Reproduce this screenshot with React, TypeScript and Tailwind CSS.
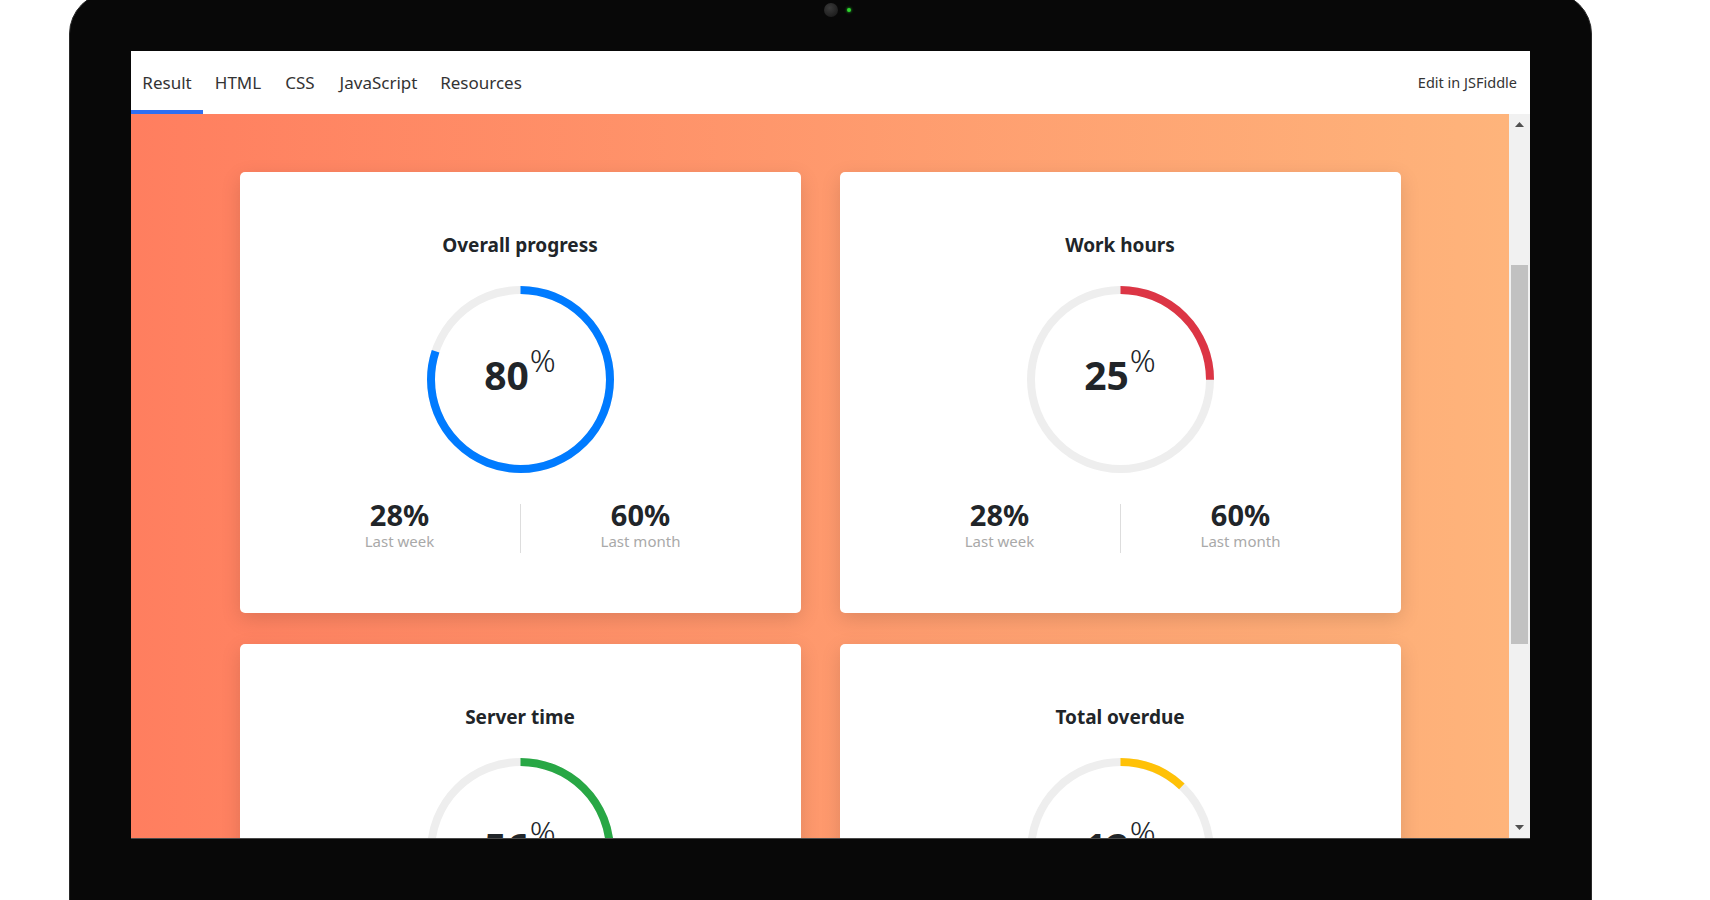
const font = { fontFamily: '"Noto Sans", "Open Sans", sans-serif' };

type Gauge = { title: string; value: number; color: string };

const gauges: Gauge[] = [
  { title: "Overall progress", value: 80, color: "#007bff" },
  { title: "Work hours", value: 25, color: "#dc3545" },
  { title: "Server time", value: 56, color: "#28a745" },
  { title: "Total overdue", value: 12, color: "#ffc107" }
];

const tabs = [
  { label: "Result", width: "w-[72px]", active: true },
  { label: "HTML", width: "w-[70px]", active: false },
  { label: "CSS", width: "w-[54px]", active: false },
  { label: "JavaScript", width: "w-[103px]", active: false },
  { label: "Resources", width: "w-[102px]", active: false }
];

function Ring({ value, color }: { value: number; color: string }) {
  const r = 89.5;
  const c = 2 * Math.PI * r;
  return (
    <div className="relative h-[187px] w-[187px]">
      <svg className="absolute inset-0" width="187" height="187" viewBox="0 0 187 187">
        <circle cx="93.5" cy="93.5" r={r} fill="none" stroke="#eeeeee" strokeWidth="8" />
        <circle
          cx="93.5"
          cy="93.5"
          r={r}
          fill="none"
          stroke={color}
          strokeWidth="8"
          strokeDasharray={`${(value / 100) * c} ${c}`}
          transform="rotate(-90 93.5 93.5)"
        />
      </svg>
      <div className="absolute inset-0 flex items-center justify-center pb-[10px]">
        <div className="flex items-start text-[#212529]">
          <span className="text-[39px] font-bold leading-[40px]">{value}</span>
          <span className="-mt-[11px] ml-[1px] text-[32px] font-light leading-[32px]">%</span>
        </div>
      </div>
    </div>
  );
}

function Card({ gauge }: { gauge: Gauge }) {
  return (
    <div className="flex h-[441px] flex-col items-center rounded-[5px] bg-white px-[40px] pt-[61px] shadow-[0_6px_20px_rgba(0,0,0,0.13)]">
      <h3 className="text-[19px] font-bold leading-[25px] text-[#212529]">{gauge.title}</h3>
      <div className="mt-[28px]">
        <Ring value={gauge.value} color={gauge.color} />
      </div>
      <div className="mt-[27px] flex w-full items-start">
        <div className="flex flex-1 flex-col items-center">
          <span className="text-[29px] font-bold leading-[29px] text-[#212529]">28%</span>
          <span className="text-[15px] leading-[24px] text-[#a9a9a9]">Last week</span>
        </div>
        <div className="mt-[4px] h-[49px] w-px bg-[#dddddd]" />
        <div className="flex flex-1 flex-col items-center">
          <span className="text-[29px] font-bold leading-[29px] text-[#212529]">60%</span>
          <span className="text-[15px] leading-[24px] text-[#a9a9a9]">Last month</span>
        </div>
      </div>
    </div>
  );
}

function Scrollbar() {
  return (
    <div className="flex w-[21px] flex-col bg-[#f1f1f1]">
      <div className="flex h-[21px] items-center justify-center">
        <svg width="9" height="5" viewBox="0 0 9 5">
          <path d="M0 5 L4.5 0 L9 5 Z" fill="#505050" />
        </svg>
      </div>
      <div className="flex-1">
        <div className="mx-[2px] mt-[130px] h-[379px] bg-[#c1c1c1]" />
      </div>
      <div className="flex h-[21px] items-center justify-center">
        <svg width="9" height="5" viewBox="0 0 9 5">
          <path d="M0 0 L4.5 5 L9 0 Z" fill="#505050" />
        </svg>
      </div>
    </div>
  );
}

export default function App() {
  return (
    <div className="h-[900px] w-[1710px] overflow-hidden bg-white" style={font}>
      <div className="-mt-[8px] ml-[69px] flex h-[930px] w-[1523px] flex-col items-center rounded-t-[42px] border border-[#2a2a2a] bg-[#080808]">
        <div className="flex h-[58px] items-start gap-[9px] pt-[10px]">
          <span className="mt-[5px] h-[4px] w-[4px]" />
          <span className="h-[14px] w-[14px] rounded-full bg-[radial-gradient(circle_at_40%_35%,#3b3b3b,#141414)]" />
          <span className="mt-[5px] h-[4px] w-[4px] rounded-full bg-[#2fd62f] shadow-[0_0_3px_#2fd62f]" />
        </div>

        <div className="flex h-[788px] w-[1399px] flex-col border-b border-[#4a4a4a] bg-white">
          <div className="flex h-[63px] shrink-0 items-stretch justify-between">
            <nav className="flex">
              {tabs.map(tab => (
                <div
                  key={tab.label}
                  className={`flex ${tab.width} items-center justify-center border-b-4 pt-[5px] text-[17px] text-[#333333] ${
                    tab.active ? "border-[#2f6ff2]" : "border-transparent"
                  }`}
                >
                  {tab.label}
                </div>
              ))}
            </nav>
            <div className="flex items-center pr-[13px] pt-[1px] text-[14.5px] text-[#333333]">Edit in JSFiddle</div>
          </div>

          <div className="flex min-h-0 flex-1">
            <div className="flex-1 overflow-hidden bg-[linear-gradient(to_right,#ff7e5f,#feb47b)] pt-[58px]">
              <div className="mx-auto grid w-[1161px] grid-cols-2 gap-x-[39px] gap-y-[31px]">
                {gauges.map(g => (
                  <Card key={g.title} gauge={g} />
                ))}
              </div>
            </div>
            <Scrollbar />
          </div>
        </div>
      </div>
    </div>
  );
}
